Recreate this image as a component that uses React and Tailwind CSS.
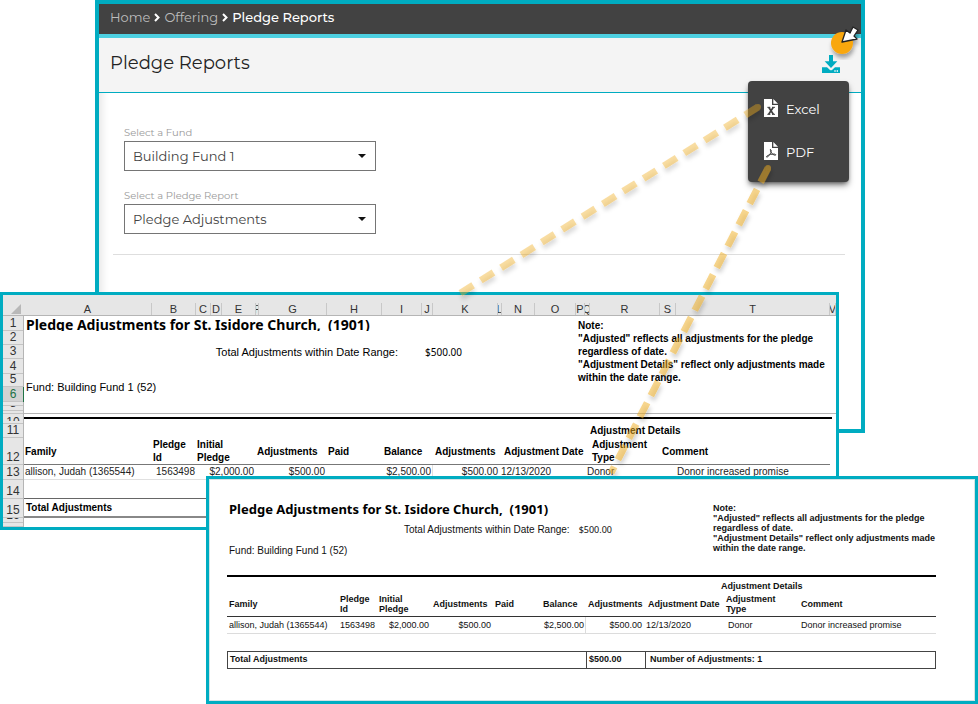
import React, { useState } from 'react';

const columns = [
  { name: 'A', width: 'w-[128px]' },
  { name: 'B', width: 'w-[44px]' },
  { name: 'C', width: 'w-[15px]' },
  { name: 'D', width: 'w-[11px]' },
  { name: 'E', width: 'w-[34px]' },
  { name: 'F', width: 'w-[3px]' },
  { name: 'G', width: 'w-[68px]' },
  { name: 'H', width: 'w-[55px]' },
  { name: 'I', width: 'w-[40px]' },
  { name: 'J', width: 'w-[11px]' },
  { name: 'K', width: 'w-[65px]' },
  { name: 'L', width: 'w-[4px]' },
  { name: 'N', width: 'w-[33px]' },
  { name: 'O', width: 'w-[41px]' },
  { name: 'P', width: 'w-[9px]' },
  { name: 'Q', width: 'w-[5px]' },
  { name: 'R', width: 'w-[70px]' },
  { name: 'S', width: 'w-[16px]' },
  { name: 'T', width: '' },
  { name: 'V', width: 'w-[6px]' },
];

const fundOptions = ['Building Fund 1', 'General Fund'];
const reportOptions = ['Pledge Adjustments', 'Pledge Summary'];

function Chevron() {
  return (
    <svg className="h-[9px] w-[6px]" viewBox="0 0 6 9" fill="none" stroke="#fff" strokeWidth="2" aria-hidden="true">
      <path d="M1 1l3.5 3.5L1 8" />
    </svg>
  );
}

function DownloadIcon() {
  return (
    <svg className="h-[18px] w-[18px]" viewBox="0 0 54 54" aria-hidden="true">
      <path fill="#00acc1" d="M21 0h12v19h13L27 39 8 19h13z" />
      <path fill="#00acc1" d="M0 37h15l9 8q3 2 6 0l9-8h15v17H0z" />
      <path fill="#fff" d="M37 46h4v4h-4zM44 46h4v4h-4z" />
    </svg>
  );
}

function FileIcon({ children }) {
  return (
    <svg className="mb-[4px] h-[18px] w-[14px]" viewBox="0 0 42 54" aria-hidden="true">
      <path fill="#fff" d="M0 0h24v18h18v36H0zM28 0l14 14H28z" />
      <g fill="none" stroke="#424242">
        {children}
      </g>
    </svg>
  );
}

function SelectField({ id, label, options }) {
  const [value, setValue] = useState(options[0]);

  return (
    <div className="flex w-[252px] flex-col">
      <label htmlFor={id} className="text-[10px] leading-4 text-[#999]">{label}</label>
      <div className="relative">
        <select
          id={id}
          value={value}
          onChange={(e) => setValue(e.target.value)}
          className="h-[30px] w-full appearance-none border border-[#757575] bg-white pt-[2px] pl-[8px] text-[13px] text-[#444]"
        >
          {options.map((option) => <option key={option}>{option}</option>)}
        </select>
        <svg className="pointer-events-none absolute top-[13px] right-[10px] h-[4px] w-[8px]" viewBox="0 0 8 4" aria-hidden="true">
          <path d="M0 0h8L4 4z" fill="#111" />
        </svg>
      </div>
    </div>
  );
}

function ReportsPage() {
  return (
    <section className="absolute top-0 right-[113px] left-[95px] h-[433px] border-4 border-[#00acc1] bg-white font-['Montserrat','Inter',sans-serif] shadow-[inset_10px_0_10px_-8px_rgba(0,0,0,0.12)]">
      <nav className="flex h-[34px] items-center gap-[4px] border-b-4 border-[#4dd0e1] bg-[#424242] pb-[3px] pl-[11px] text-[13px] text-[#bdbdbd]">
        <a href="#home">Home</a>
        <Chevron />
        <a href="#offering">Offering</a>
        <Chevron />
        <span className="font-medium text-white">Pledge Reports</span>
      </nav>
      <header className="flex h-[55px] items-center justify-between border-b border-[#00acc1] bg-[#f4f4f4] pr-[21px] pl-[11px]">
        <h1 className="pb-[4px] text-[18px] text-[#222]">Pledge Reports</h1>
        <button type="button" aria-label="Download report" className="pb-[2px]"><DownloadIcon /></button>
      </header>
      <div className="mr-4 ml-[14px] flex flex-col gap-[17px] border-b border-[#dedede] pt-[32px] pb-[20px] pl-[11px]">
        <SelectField id="fund" label="Select a Fund" options={fundOptions} />
        <SelectField id="report" label="Select a Pledge Report" options={reportOptions} />
      </div>
      <div className="absolute top-[77px] right-[12px] flex h-[101px] w-[101px] flex-col justify-center gap-[16px] rounded bg-[#424242] pl-4 text-[13px] text-white shadow-md shadow-black/50">
        <button type="button" className="flex h-[27px] items-center gap-2">
          <FileIcon>
            <path strokeWidth="5" d="M14 25l14 21M28 25L14 46" />
            <path strokeWidth="3" d="M10 25h9M24 25h9M10 46h9M24 46h9" />
          </FileIcon>
          Excel
        </button>
        <button type="button" className="flex h-[27px] items-center gap-2">
          <FileIcon>
            <path strokeWidth="3" d="M19 22q4 0 2 9-3 9-12 15-4 0 1-5 8-5 21-5 7 2 3 4-8 0-14-11-1-5-1-7" />
          </FileIcon>
          PDF
        </button>
      </div>
    </section>
  );
}

function RowHead({ height, active, children }) {
  return (
    <th scope="row" className={`border-r p-0 font-normal ${active ? 'border-[#217346] bg-[#d2d2d2] text-[#217346]' : 'border-[#b5b5b5] bg-[#e6e6e6] text-[#333]'}`}>
      <div className={`flex items-end justify-center overflow-hidden border-b border-[#c4c4c4] text-[12px] leading-[13px] ${height}`}>
        {children}
      </div>
    </th>
  );
}

function SpreadsheetWindow() {
  return (
    <section className="absolute top-[292px] right-[139px] left-0 overflow-hidden border-[3px] border-[#00acc1] bg-white font-['Liberation_Sans',Arial,sans-serif] text-black">
      <table className="w-full table-fixed border-separate border-spacing-0 text-left text-[10px] leading-[13px] whitespace-nowrap">
        <colgroup>
          <col className="w-[21px]" />
          {columns.map((col) => <col key={col.name} className={col.width} />)}
        </colgroup>
        <thead>
          <tr className="bg-[#e6e6e6]">
            <td className="h-[21px] border-b border-[#b5b5b5] p-0">
              <svg className="mt-[8px] ml-[8px] h-[10px] w-[10px]" viewBox="0 0 10 10" aria-hidden="true">
                <path d="M10 0v10H0z" fill="#b8b8b8" />
              </svg>
            </td>
            {columns.map((col) => (
              <th key={col.name} scope="col" className="border-b border-[#b5b5b5] p-0 font-normal">
                <div className="mt-[8px] flex h-[12px] items-center justify-center overflow-hidden border-r border-[#c8c8c8] text-[11px] leading-3 text-[#333]">
                  {col.name}
                </div>
              </th>
            ))}
          </tr>
        </thead>
        <tbody>
          <tr>
            <RowHead height="h-[15px]">1</RowHead>
            <td colSpan={14} className="p-0 pl-[2px]">
              <h2 className="h-[14px] overflow-hidden font-['Noto_Sans',sans-serif] text-[14px] leading-[15px] font-bold whitespace-pre">
                Pledge Adjustments for St. Isidore Church,  (1901)
              </h2>
            </td>
            <td colSpan={6} rowSpan={8} className="p-0 pt-[3px] pl-[2px] align-top font-bold">
              <p>Note:</p>
              <p>"Adjusted" reflects all adjustments for the pledge</p>
              <p>regardless of date.</p>
              <p>"Adjustment Details" reflect only adjustments made</p>
              <p>within the date range.</p>
            </td>
          </tr>
          <tr><RowHead height="h-[14px]">2</RowHead><td colSpan={14} className="p-0" /></tr>
          <tr>
            <RowHead height="h-[14px]">3</RowHead>
            <td colSpan={8} className="p-0 text-right text-[11px]"><span className="mr-[-16px]">Total Adjustments within Date Range:</span></td>
            <td colSpan={6} className="p-0 pl-[43px] font-['Noto_Sans',sans-serif] text-[10px]">$500.00</td>
          </tr>
          <tr><RowHead height="h-[15px]">4</RowHead><td colSpan={14} className="p-0" /></tr>
          <tr>
            <RowHead height="h-[13px]">5</RowHead>
            <td colSpan={14} rowSpan={2} className="p-0 pb-[2px] pl-[2px] text-[11px]">Fund: Building Fund 1 (52)</td>
          </tr>
          <tr><RowHead height="h-[15px]" active>6</RowHead></tr>
          <tr><RowHead height="h-[4px]">7</RowHead><td colSpan={14} className="p-0" /></tr>
          <tr><RowHead height="h-[5px]">8</RowHead><td colSpan={14} className="p-0" /></tr>
          <tr><RowHead height="h-[3px]">9</RowHead><td colSpan={20} className="border-b border-[#b5b5b5] p-0" /></tr>
          <tr>
            <RowHead height="h-[10px]"><span className="mb-[2px] h-[4px] overflow-hidden leading-[10px]">10</span></RowHead>
            <td colSpan={20} className="p-0 align-top"><div className="mt-[3px] mr-[4px] border-t-2 border-black" /></td>
          </tr>
          <tr>
            <RowHead height="h-[14px]">11</RowHead>
            <td colSpan={16} className="p-0" />
            <td colSpan={4} className="p-0 pb-px font-bold">Adjustment Details</td>
          </tr>
          <tr className="[&>td]:border-b [&>td]:border-[#777] [&>td]:p-0 [&>td]:font-bold">
            <RowHead height="h-[26px]">12</RowHead>
            <td><span className="pl-px">Family</span></td>
            <td><span className="block pl-px">Pledge<br />Id</span></td>
            <td colSpan={3}><span className="block pl-px">Initial<br />Pledge</span></td>
            <td colSpan={2}><span className="pl-px">Adjustments</span></td>
            <td><span className="pl-px">Paid</span></td>
            <td><span className="pl-[2px]">Balance</span></td>
            <td colSpan={2}><span className="pl-[13px]">Adjustments</span></td>
            <td colSpan={5}><span className="pl-[6px]">Adjustment Date</span></td>
            <td><span className="block pl-[2px]">Adjustment<br />Type</span></td>
            <td colSpan={2}><span className="pl-[2px]">Comment</span></td>
            <td className="border-transparent!" />
          </tr>
          <tr className="text-[#222] [&>td]:border-b [&>td]:border-[#e0e0e0] [&>td]:p-0 [&>td]:pb-px">
            <RowHead height="h-[15px]">13</RowHead>
            <td><span className="pl-px">allison, Judah (1365544)</span></td>
            <td className="text-right"><span className="pr-px">1563498</span></td>
            <td colSpan={3} className="text-right"><span className="pr-[2px]">$2,000.00</span></td>
            <td colSpan={2} className="text-right"><span className="pr-[2px]">$500.00</span></td>
            <td />
            <td colSpan={2} className="border-r text-right"><span className="pr-px">$2,500.00</span></td>
            <td className="text-right">$500.00</td>
            <td colSpan={4}><span className="pl-[3px]">12/13/2020</span></td>
            <td colSpan={3}><span className="pl-[2px]">Donor</span></td>
            <td><span className="pl-px">Donor increased promise</span></td>
            <td />
          </tr>
          <tr>
            <RowHead height="h-[19px]">14</RowHead>
            <td colSpan={20} className="border-b border-[#666] p-0" />
          </tr>
          <tr>
            <RowHead height="h-[19px]">15</RowHead>
            <td colSpan={20} className="border-b-2 border-[#888] p-0 pl-[2px] font-bold">Total Adjustments</td>
          </tr>
          <tr><RowHead height="h-[5px]">16</RowHead><td colSpan={20} className="p-0" /></tr>
          <tr><RowHead height="h-[4px]">17</RowHead><td colSpan={20} className="p-0" /></tr>
        </tbody>
      </table>
    </section>
  );
}

function PdfWindow() {
  return (
    <section className="absolute top-[476px] right-0 left-[206px] h-[228px] border-[3px] border-[#00acc1] bg-white font-['Liberation_Sans',Arial,sans-serif] text-[#111]">
      <div className="h-full border border-[#d5e3e5] pr-[38px] pl-[17px]">
        <div className="flex justify-between pt-[20px] pl-[2px]">
          <div>
            <h2 className="font-['Noto_Sans',sans-serif] text-[13px] leading-[18px] font-bold whitespace-pre text-black">
              Pledge Adjustments for St. Isidore Church,  (1901)
            </h2>
            <p className="flex gap-[9px] pt-[4px] pl-[175px] text-[10px] leading-4">
              Total Adjustments within Date Range:
              <span className="font-['Noto_Sans',sans-serif] text-[9px]">$500.00</span>
            </p>
            <p className="pt-[5px] text-[10px] leading-4">Fund: Building Fund 1 (52)</p>
          </div>
          <div className="w-[223px] pt-[3px] text-[9px] leading-[10px] font-bold whitespace-nowrap">
            <p>Note:</p>
            <p>"Adjusted" reflects all adjustments for the pledge</p>
            <p>regardless of date.</p>
            <p>"Adjustment Details" reflect only adjustments made</p>
            <p>within the date range.</p>
          </div>
        </div>
        <table className="mt-[16px] w-full table-fixed border-separate border-spacing-0 border-t-2 border-black text-left text-[9px] leading-[10px] whitespace-nowrap">
          <colgroup>
            <col className="w-[111px]" />
            <col className="w-[39px]" />
            <col className="w-[54px]" />
            <col className="w-[62px]" />
            <col className="w-[48px]" />
            <col className="w-[45px]" />
            <col className="w-[60px]" />
            <col className="w-[78px]" />
            <col className="w-[61px]" />
            <col />
          </colgroup>
          <thead>
            <tr>
              <td colSpan={7} className="h-[17px] p-0" />
              <th colSpan={3} scope="colgroup" className="p-0 pt-px pl-[75px]">Adjustment Details</th>
            </tr>
            <tr className="[&>th]:h-[23px] [&>th]:border-b [&>th]:border-[#333] [&>th]:p-0 [&>th]:pb-[2px] [&>th]:pl-[2px]">
              <th scope="col">Family</th>
              <th scope="col">Pledge<br />Id</th>
              <th scope="col">Initial<br />Pledge</th>
              <th scope="col">Adjustments</th>
              <th scope="col">Paid</th>
              <th scope="col">Balance</th>
              <th scope="col">Adjustments</th>
              <th scope="col">Adjustment Date</th>
              <th scope="col">Adjustment<br />Type</th>
              <th scope="col"><span className="pl-[14px]">Comment</span></th>
            </tr>
          </thead>
          <tbody>
            <tr className="[&>td]:h-[17px] [&>td]:border-b [&>td]:border-[#dcdcdc] [&>td]:p-0">
              <td className="pl-[2px]!">allison, Judah (1365544)</td>
              <td className="pr-[2px]! text-right">1563498</td>
              <td className="pr-[2px]! text-right">$2,000.00</td>
              <td className="pr-[2px]! text-right">$500.00</td>
              <td />
              <td className="border-r pr-px! text-right">$2,500.00</td>
              <td className="pr-[4px]! text-right">$500.00</td>
              <td>12/13/2020</td>
              <td className="pl-[4px]!">Donor</td>
              <td className="pl-[16px]!">Donor increased promise</td>
            </tr>
          </tbody>
        </table>
        <div className="mt-[17px] flex h-[18px] items-center border border-[#444] text-[9px] font-bold">
          <span className="w-[358px] pl-[2px]">Total Adjustments</span>
          <span className="flex h-full w-[60px] items-center border-x border-[#444] pl-[2px]">$500.00</span>
          <span className="pl-[4px]">Number of Adjustments: 1</span>
        </div>
      </div>
    </section>
  );
}

function Connectors() {
  return (
    <svg className="pointer-events-none absolute top-0 right-0 h-[704px] w-[978px]" viewBox="0 0 978 704" fill="none" aria-hidden="true">
      <defs>
        <filter id="soft" x="-20%" y="-20%" width="140%" height="140%">
          <feDropShadow dx="1" dy="4" stdDeviation="2" floodColor="#000" floodOpacity="0.35" />
        </filter>
      </defs>
      <g stroke="#f0ad1e" strokeWidth="7" filter="url(#soft)">
        <g opacity="0.4">
          <path strokeDasharray="15 9" d="M758 107L459 294" />
          <circle cx="758" cy="107" r="3" fill="#f0ad1e" stroke="none" />
        </g>
        <g opacity="0.5">
          <path strokeDasharray="16 8" d="M768 168L611 473" />
          <circle cx="768" cy="168" r="3" fill="#f0ad1e" stroke="none" />
        </g>
      </g>
      <g filter="url(#soft)">
        <circle cx="842" cy="43" r="11" fill="#f9a70f" />
        <path d="M842 42l4-12 4 3 3-6 5 3-4 6 3 3z" fill="#fff" stroke="#222" strokeWidth="1.3" strokeLinejoin="round" />
      </g>
    </svg>
  );
}

export default function App() {
  return (
    <main className="relative min-h-[704px] overflow-hidden bg-white">
      <ReportsPage />
      <SpreadsheetWindow />
      <Connectors />
      <PdfWindow />
    </main>
  );
}
